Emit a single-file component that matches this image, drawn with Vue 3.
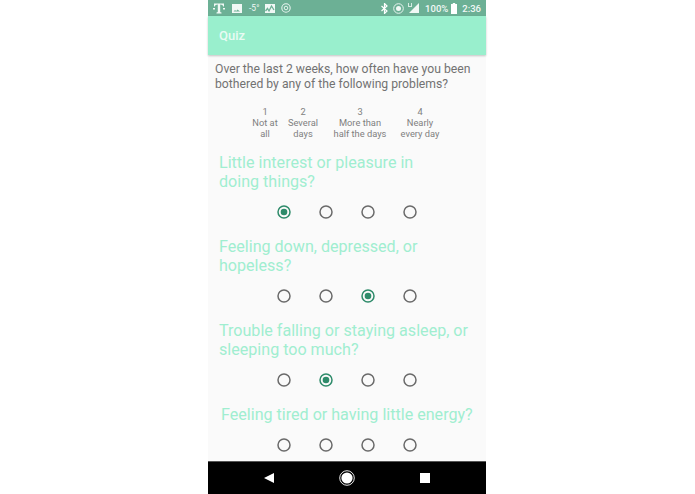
<script setup>
const legend = [
  { n: '1', a: 'Not at', b: 'all', w: 38 },
  { n: '2', a: 'Several', b: 'days', w: 38 },
  { n: '3', a: 'More than', b: 'half the days', w: 76 },
  { n: '4', a: 'Nearly', b: 'every day', w: 44 }
]
const questions = [
  { lines: ['Little interest or pleasure in', 'doing things?'], picked: 0 },
  { lines: ['Feeling down, depressed, or', 'hopeless?'], picked: 2 },
  { lines: ['Trouble falling or staying asleep, or', 'sleeping too much?'], picked: 1 },
  { lines: ['Feeling tired or having little energy?'], picked: -1, shifted: true }
]
</script>

<template>
  <div class="stage">
    <div class="phone">
      <header class="status">
        <svg class="ic t" width="12" height="11" viewBox="0 0 12 11">
          <path d="M1 .5h10v3h-.8C10 2.200 9 1.500 7.200 1.500v7c0 .7.300.9 1.300.9v1h-5v-1c1 0 1.300-.2 1.300-.9v-7C3 1.500 2 2.200 1.800 3.500H1z" fill="#f1f8f5"/>
          <path d="M0 5h2v1.500H0zM10 5h2v1.500h-2z" fill="#f1f8f5"/>
        </svg>
        <svg class="ic img" width="10" height="9" viewBox="0 0 10 9">
          <path d="M0 0h10v9H0z" fill="#f1f8f5"/>
          <path d="M1.500 7.500l1.500-1.500 1.200 1 1.300-1.500 2.500 2z" fill="#6cb095"/>
        </svg>
        <span class="temp">-5°</span>
        <svg class="ic chart" width="10" height="9" viewBox="0 0 10 9">
          <path d="M0 0h10v9H0z" fill="#f1f8f5"/>
          <path d="M.5 7l2-2.500 1.500 2.500L6.500 2 9 6" fill="none" stroke="#6cb095" stroke-width="1.300"/>
        </svg>
        <svg class="ic globe" width="10" height="10" viewBox="0 0 10 10">
          <circle cx="5" cy="5" r="4.200" fill="none" stroke="#e6f3ee" stroke-width="1.100"/>
          <circle cx="5" cy="5" r="1.800" fill="none" stroke="#e6f3ee" stroke-width="1"/>
        </svg>
        <span class="spacer"></span>
        <svg class="ic bt" width="7" height="11" viewBox="0 0 7 11">
          <path d="M.5 3l5.500 5-2.500 2.500v-10L6 3 .5 8" fill="none" stroke="#fff" stroke-width="1.200"/>
        </svg>
        <svg class="ic target" width="11" height="11" viewBox="0 0 11 11">
          <circle cx="5.500" cy="5.500" r="4.800" fill="none" stroke="#e6f3ee" stroke-width="1"/>
          <circle cx="5.500" cy="5.500" r="2.500" fill="#f1f8f5"/>
        </svg>
        <svg class="ic signal" width="12" height="10" viewBox="0 0 12 10">
          <path d="M12 0v10H2l5-5z" fill="#f1f8f5"/>
          <path d="M1 0h1v3h2V0h1v4H1z" fill="#d5ebe2"/>
        </svg>
        <span class="pct">100%</span>
        <svg class="ic batt" width="6" height="11" viewBox="0 0 6 11">
          <path d="M1.800 0h2.400v1H6v10H0V1h1.800z" fill="#fff"/>
        </svg>
        <span class="time">2:36</span>
      </header>

      <div class="appbar">Quiz</div>

      <main class="content">
        <p class="intro">Over the last 2 weeks, how often have you been<br />bothered by any of the following problems?</p>

        <div class="legend">
          <div v-for="item in legend" :key="item.n" class="legend-col" :style="{ width: item.w + 'px' }">
            <span>{{ item.n }}</span>
            <span>{{ item.a }}</span>
            <span>{{ item.b }}</span>
          </div>
        </div>

        <section v-for="(q, qi) in questions" :key="qi" class="question">
          <h2 class="q-text" :class="{ shifted: q.shifted }">
            <span v-for="line in q.lines" :key="line" class="q-line">{{ line }}</span>
          </h2>
          <div class="radios">
            <svg v-for="o in 4" :key="o" class="radio" :class="{ on: q.picked === o - 1 }" width="14" height="14" viewBox="0 0 14 14">
              <circle class="ring" cx="7" cy="7" r="6" />
              <circle v-if="q.picked === o - 1" class="dot" cx="7" cy="7" r="3.300" />
            </svg>
          </div>
        </section>
      </main>

      <footer class="nav">
        <svg width="12" height="12" viewBox="0 0 12 12"><path d="M11 1v10L1 6z" fill="#fff"/></svg>
        <svg width="16" height="16" viewBox="0 0 16 16">
          <circle cx="8" cy="8" r="7.300" fill="none" stroke="#fff" stroke-width=".9"/>
          <circle cx="8" cy="8" r="5.600" fill="#fff"/>
        </svg>
        <svg width="12" height="12" viewBox="0 0 12 12"><path d="M1 1h10v10H1z" fill="#fff"/></svg>
      </footer>
    </div>
  </div>
</template>

<style scoped>
.stage {
  width: 695px;
  height: 494px;
  display: flex;
  padding-left: 208px;
  box-sizing: border-box;
  background: #fff;
  font-family: Roboto, "Liberation Sans", sans-serif;
  overflow: hidden;
}
.phone {
  width: 278px;
  height: 494px;
  display: flex;
  flex-direction: column;
  background: #fafafa;
}
.status {
  height: 16px;
  flex: none;
  display: flex;
  align-items: center;
  padding: 0 5px;
  background: #6cb095;
  color: #f1f8f5;
  font-size: 9.500px;
}
.spacer { flex: 1; }
.ic { flex: none; display: block; }
.img { margin-left: 7px; }
.temp { margin-left: 7px; font-size: 8.500px; width: 11px; white-space: nowrap; }
.chart { margin-left: 5px; }
.globe { margin-left: 6px; }
.target { margin-left: 5px; }
.signal { margin-left: 3px; }
.pct { margin-left: 6px; font-weight: 500; }
.batt { margin-left: 3px; }
.time { margin-left: 5px; font-weight: 500; }
.appbar {
  height: 39px;
  flex: none;
  box-sizing: border-box;
  padding-left: 11px;
  display: flex;
  align-items: center;
  background: #99efcd;
  color: #e8fbf3;
  font-size: 13px;
  font-weight: 500;
  box-shadow: 0 1px 2px rgba(0, 0, 0, 0.22);
  position: relative;
}
.content {
  flex: 1;
  min-height: 0;
  overflow: hidden;
}
.intro {
  margin: 7px 0 0 7px;
  font-size: 12.200px;
  line-height: 15px;
  color: #727272;
  white-space: nowrap;
}
.legend {
  margin: 14px 0 0 38px;
  display: flex;
  font-size: 9.300px;
  line-height: 11px;
  color: #808080;
}
.legend-col {
  display: flex;
  flex-direction: column;
  align-items: center;
  flex: none;
  white-space: nowrap;
}
.question { margin-bottom: 4px; }
.legend + .question { margin-top: 14px; }
.q-text {
  margin: 0 0 0 11px;
  font-size: 16.100px;
  font-weight: 400;
  line-height: 19px;
  color: #a0eed0;
  white-space: nowrap;
}
.q-text.shifted { margin-left: 13px; }
.q-line { display: block; }
.radios {
  margin-left: 55px;
  width: 168px;
  height: 42px;
  display: grid;
  grid-template-columns: repeat(4, 42px);
  align-items: center;
  justify-items: center;
}
.ring {
  fill: none;
  stroke: #6a6a6a;
  stroke-width: 1.500;
}
.radio.on .ring { stroke: #2e8b6a; }
.dot { fill: #2e8b6a; }
.nav {
  height: 33px;
  flex: none;
  background: #000;
  display: flex;
  align-items: center;
  padding-left: 55px;
  gap: 64px;
  border-top: 1px solid #555;
  box-sizing: border-box;
}
p, h2 { padding: 0; }
</style>

<style>
html, body { margin: 0; background: #fff; }
</style>
